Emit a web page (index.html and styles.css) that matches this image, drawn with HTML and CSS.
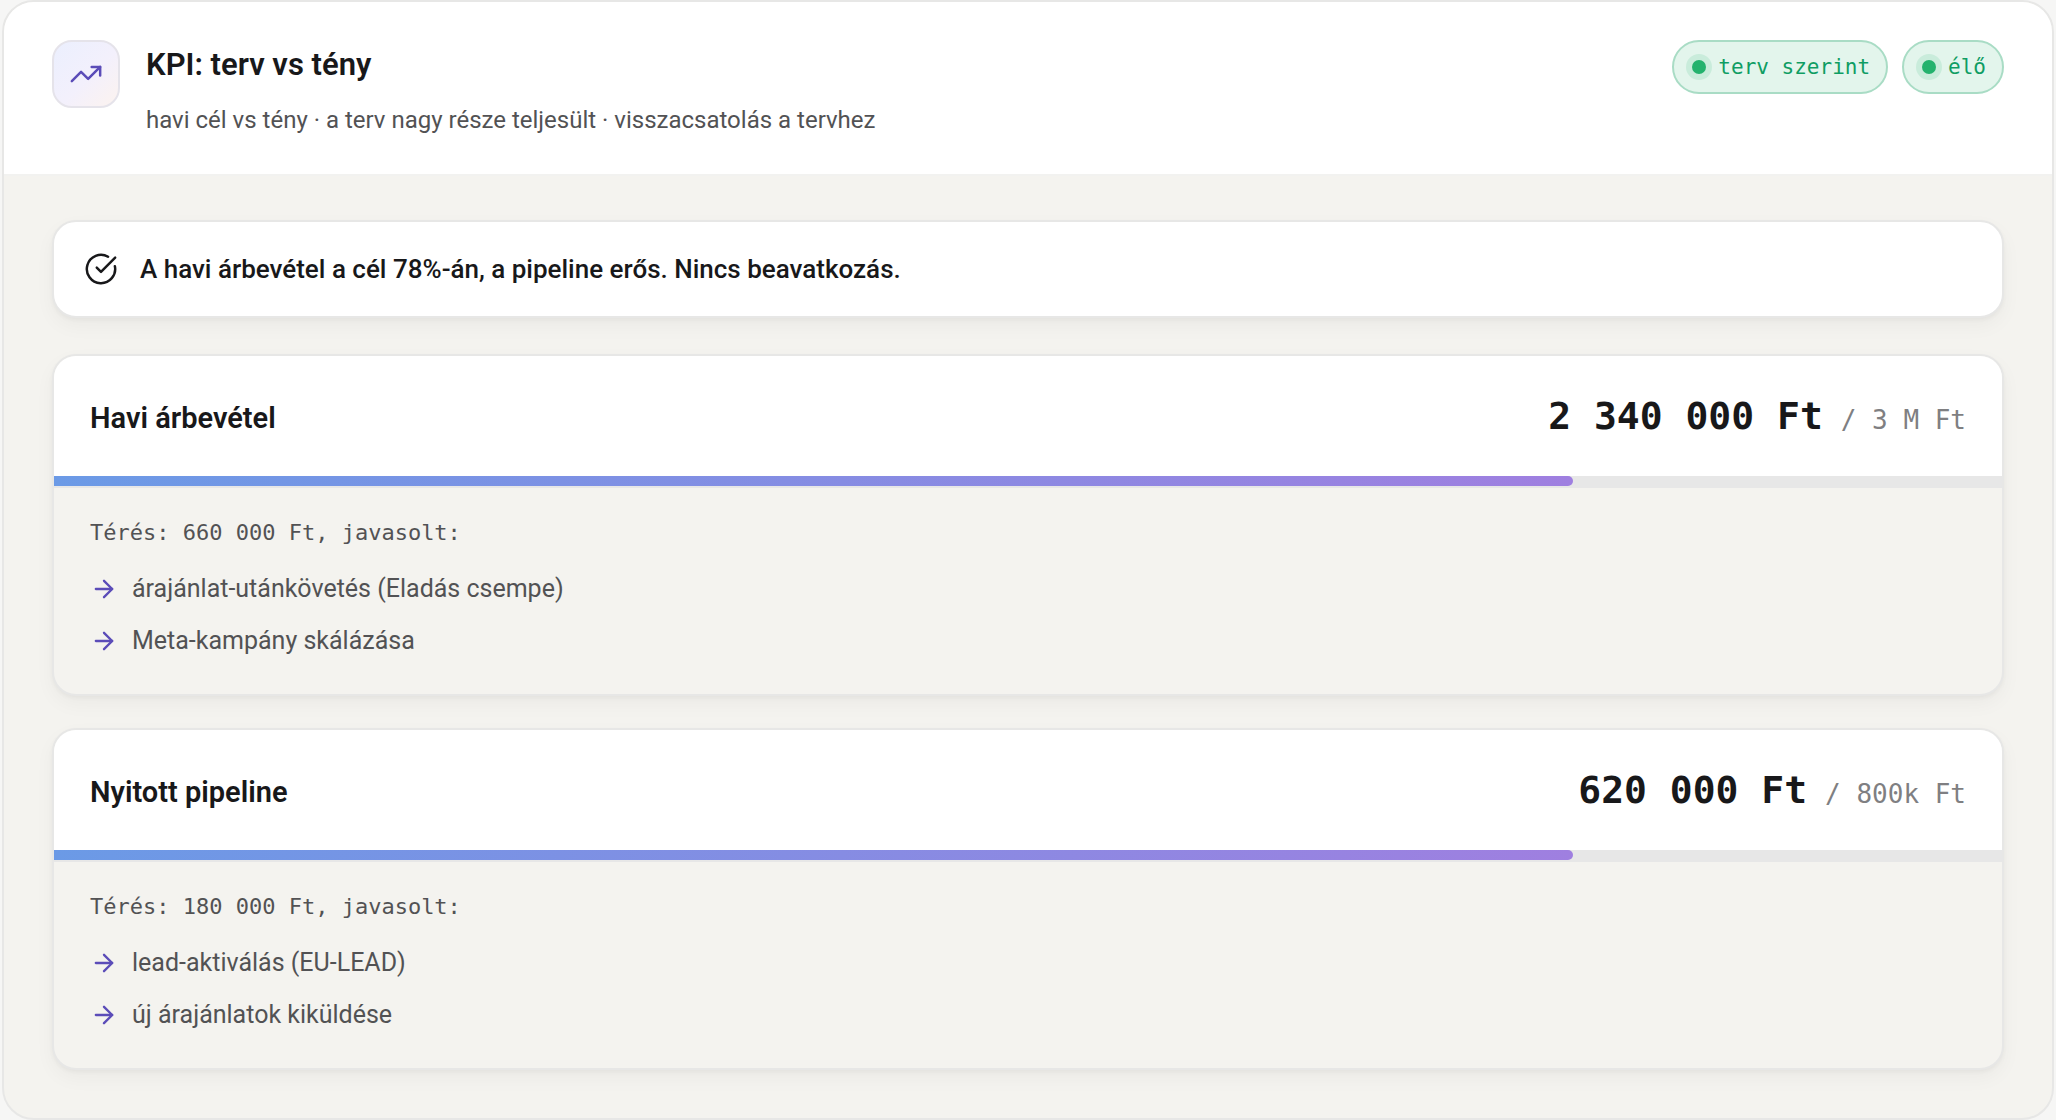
FILE: index.html
```html
<!DOCTYPE html>
<html lang="hu">
<head>
    <meta charset="UTF-8">
    <meta name="viewport" content="width=device-width, initial-scale=1.0">
    <title>KPI: terv vs tény</title>
    <link rel="stylesheet" href="styles.css">
</head>
<body>
    <main class="panel">
        <header class="panel-header">
            <div class="panel-icon">
                <svg class="icon" viewBox="0 0 24 24" aria-hidden="true">
                    <path d="M16 7h6v6"/>
                    <path d="m22 7-8.5 8.5-5-5L2 17"/>
                </svg>
            </div>
            <div class="panel-heading">
                <h1>KPI: terv vs tény</h1>
                <p>havi cél vs tény · a terv nagy része teljesült · visszacsatolás a tervhez</p>
            </div>
            <div class="badges">
                <span class="badge"><span class="dot"></span>terv szerint</span>
                <span class="badge"><span class="dot"></span>élő</span>
            </div>
        </header>

        <div class="panel-body">
            <div class="notice">
                <svg class="icon" viewBox="0 0 24 24" aria-hidden="true">
                    <path d="M21.801 10A10 10 0 1 1 17 3.335"/>
                    <path d="m9 11 3 3L22 4"/>
                </svg>
                <p>A havi árbevétel a cél 78%-án, a pipeline erős. Nincs beavatkozás.</p>
            </div>

            <section class="card">
                <div class="card-header">
                    <h2>Havi árbevétel</h2>
                    <p class="amount">2 340 000 Ft <span class="target">/ 3 M Ft</span></p>
                </div>
                <div class="progress">
                    <div class="progress-fill" style="width: 78%"></div>
                </div>
                <div class="card-body">
                    <p class="gap-label">Térés: 660 000 Ft, javasolt:</p>
                    <ul class="actions">
                        <li>
                            <svg class="arrow" viewBox="0 0 24 24" aria-hidden="true"><path d="M5 12h14"/><path d="m12 5 7 7-7 7"/></svg>
                            árajánlat-utánkövetés (Eladás csempe)
                        </li>
                        <li>
                            <svg class="arrow" viewBox="0 0 24 24" aria-hidden="true"><path d="M5 12h14"/><path d="m12 5 7 7-7 7"/></svg>
                            Meta-kampány skálázása
                        </li>
                    </ul>
                </div>
            </section>

            <section class="card">
                <div class="card-header">
                    <h2>Nyitott pipeline</h2>
                    <p class="amount">620 000 Ft <span class="target">/ 800k Ft</span></p>
                </div>
                <div class="progress">
                    <div class="progress-fill" style="width: 78%"></div>
                </div>
                <div class="card-body">
                    <p class="gap-label">Térés: 180 000 Ft, javasolt:</p>
                    <ul class="actions">
                        <li>
                            <svg class="arrow" viewBox="0 0 24 24" aria-hidden="true"><path d="M5 12h14"/><path d="m12 5 7 7-7 7"/></svg>
                            lead-aktiválás (EU-LEAD)
                        </li>
                        <li>
                            <svg class="arrow" viewBox="0 0 24 24" aria-hidden="true"><path d="M5 12h14"/><path d="m12 5 7 7-7 7"/></svg>
                            új árajánlatok kiküldése
                        </li>
                    </ul>
                </div>
            </section>
        </div>
    </main>
</body>
</html>
```
FILE: styles.css
```css
:root {
    --surface: #ffffff;
    --muted-surface: #f4f3ef;
    --border: #e7e7e6;
    --text: #18181a;
    --text-soft: #525254;
    --text-faint: #7f7f82;
    --accent: #5b4cb8;
    --green: #0f9d63;
    --sans: Roboto, "Liberation Sans", sans-serif;
    --mono: "DejaVu Sans Mono", "Liberation Mono", monospace;
}

* {
    box-sizing: border-box;
}

body {
    margin: 0;
    padding: 0 2px;
    font-family: var(--sans);
    color: var(--text);
    background: #f6f6f5;
}

h1,
h2,
p,
ul {
    margin: 0;
    padding: 0;
}

.panel {
    border: 2px solid var(--border);
    border-radius: 32px;
    background: var(--muted-surface);
    overflow: hidden;
}

.panel-header {
    display: flex;
    align-items: flex-start;
    padding: 38px 48px 34px;
    background: var(--surface);
    border-bottom: 2px solid #f2f2f0;
}

.panel-icon {
    display: flex;
    align-items: center;
    justify-content: center;
    width: 68px;
    height: 68px;
    border: 2px solid #e5e3ea;
    border-radius: 20px;
    background: linear-gradient(135deg, #ebeffe, #f3f0fc 55%, #fcf3ef);
    color: var(--accent);
}

.icon {
    flex: none;
    width: 34px;
    height: 34px;
    fill: none;
    stroke: currentColor;
    stroke-width: 1.75;
    stroke-linecap: round;
    stroke-linejoin: round;
}

.panel-heading {
    flex: 1;
    margin-left: 26px;
}

.panel-heading h1 {
    font-size: 31px;
    font-weight: 600;
    line-height: 50px;
}

.panel-heading p {
    margin-top: 10px;
    font-size: 24px;
    line-height: 40px;
    color: var(--text-soft);
}

.badges {
    display: flex;
    gap: 14px;
}

.badge {
    display: flex;
    align-items: center;
    gap: 12px;
    height: 54px;
    padding: 0 16px 0 18px;
    border: 2px solid #a9dcc5;
    border-radius: 27px;
    background: #e3f5ec;
    font-family: var(--mono);
    font-size: 21px;
    color: var(--green);
}

.dot {
    width: 14px;
    height: 14px;
    border-radius: 50%;
    background: #23b26d;
    box-shadow: 0 0 0 6px #c9ecdb;
}

.panel-body {
    padding: 44px 48px 48px;
}

.notice,
.card {
    border: 2px solid var(--border);
    border-radius: 24px;
    box-shadow: 0 2px 4px rgba(0, 0, 0, 0.04), 0 8px 20px rgba(0, 0, 0, 0.04);
}

.notice {
    display: flex;
    align-items: center;
    gap: 22px;
    padding: 28px 30px;
    background: var(--surface);
    font-size: 26px;
    font-weight: 500;
    line-height: 38px;
}

.card {
    margin-top: 32px;
    overflow: hidden;
    background: var(--muted-surface);
}

.notice + .card {
    margin-top: 36px;
}

.card-header {
    display: flex;
    align-items: flex-end;
    justify-content: space-between;
    padding: 32px 36px;
    background: var(--surface);
}

.card-header h2 {
    font-size: 29px;
    font-weight: 600;
    line-height: 52px;
}

.amount {
    display: flex;
    align-items: baseline;
    gap: 18px;
    font-family: var(--mono);
    font-size: 38px;
    font-weight: 700;
    line-height: 56px;
}

.target {
    font-size: 26px;
    font-weight: 400;
    line-height: 40px;
    color: var(--text-faint);
}

.progress {
    height: 12px;
    background: #e7e7e7;
}

.progress-fill {
    height: 10px;
    border-radius: 0 5px 5px 0;
    background: linear-gradient(90deg, #6b9ae6, #9f7fe0);
}

.card-body {
    padding: 27px 36px 33px;
}

.gap-label {
    font-family: var(--mono);
    font-size: 22px;
    line-height: 36px;
    color: var(--text-soft);
}

.actions {
    display: grid;
    gap: 12px;
    margin-top: 18px;
    list-style: none;
    font-size: 25px;
    line-height: 40px;
    color: var(--text-soft);
}

.actions li {
    display: flex;
    align-items: center;
    gap: 14px;
}

.arrow {
    flex: none;
    width: 28px;
    height: 28px;
    fill: none;
    stroke: var(--accent);
    stroke-width: 2;
    stroke-linecap: round;
    stroke-linejoin: round;
}
```
